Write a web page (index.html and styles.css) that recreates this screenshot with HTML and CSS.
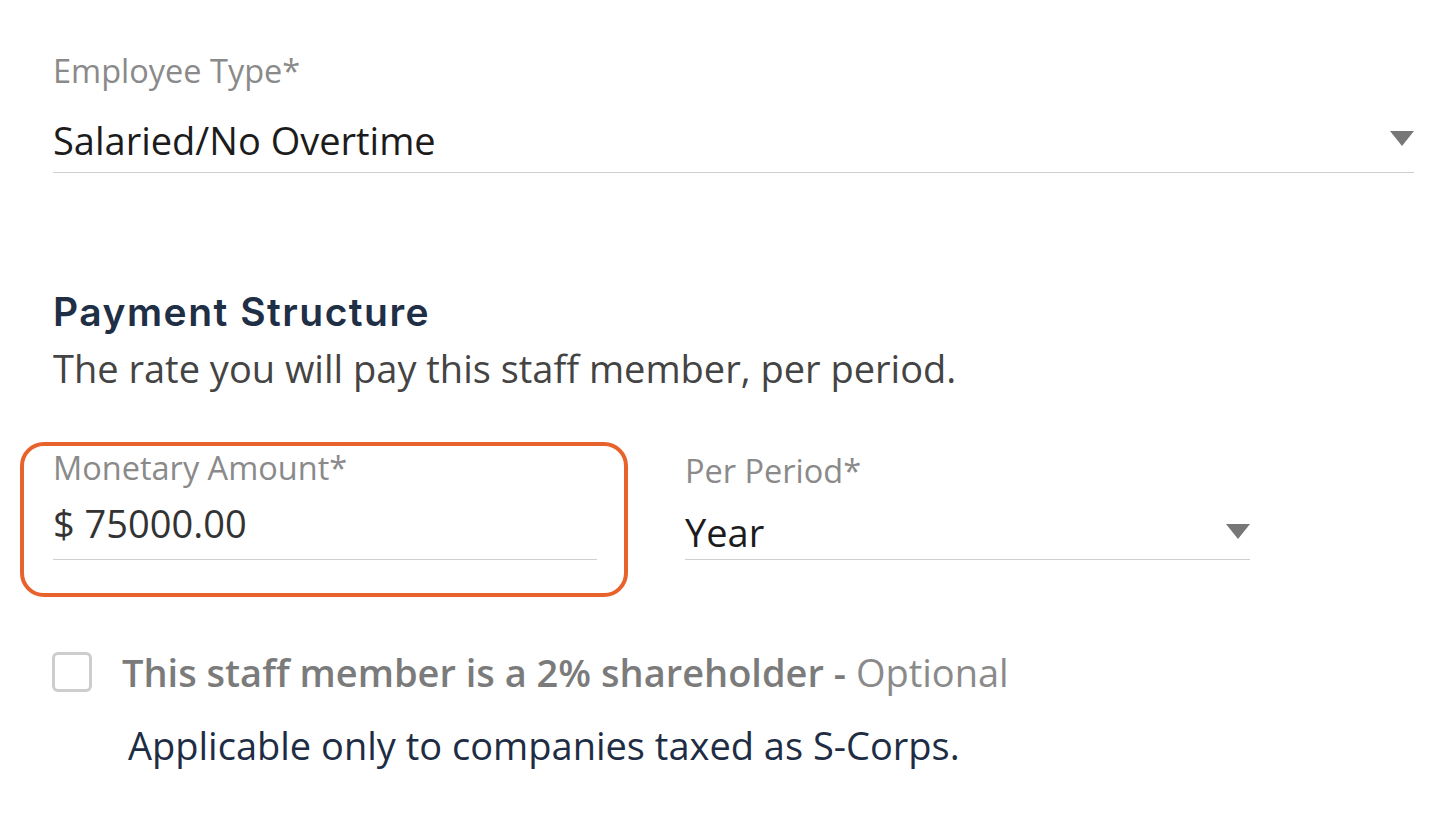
FILE: index.html
```html
<!DOCTYPE html>
<html lang="en">
<head>
<meta charset="utf-8">
<title>Payment Structure</title>
<link rel="stylesheet" href="styles.css">
</head>
<body>
<main class="page">
  <section class="field field-full">
    <div class="label">Employee Type*</div>
    <div class="select-line">
      <div class="value value-dark">Salaried/No Overtime</div>
      <span class="caret caret-top"></span>
    </div>
  </section>

  <h2 class="heading">Payment Structure</h2>
  <p class="subtext">The rate you will pay this staff member, per period.</p>

  <div class="pay-row">
    <section class="field highlight">
      <div class="label">Monetary Amount*</div>
      <div class="input-line">
        <div class="value value-mid">$ 75000.00</div>
      </div>
    </section>
    <section class="field period">
      <div class="label">Per Period*</div>
      <div class="select-line period-line">
        <div class="value value-dark year">Year</div>
        <span class="caret caret-period"></span>
      </div>
    </section>
  </div>

  <label class="check-row">
    <span class="checkbox"></span>
    <span class="check-text"><strong>This staff member is a 2% shareholder - </strong><span class="optional">Optional</span></span>
  </label>
  <p class="note">Applicable only to companies taxed as S-Corps.</p>
</main>
</body>
</html>
```

FILE: styles.css
```css
* { box-sizing: border-box; }

html, body {
  margin: 0;
  padding: 0;
  background: #ffffff;
}

body {
  font-family: "Open Sans", "Noto Sans", sans-serif;
  color: #222;
}

.page {
  width: 1444px;
  padding: 51px 30px 0 53px;
}

.label {
  font-size: 32.5px;
  line-height: 40px;
  color: #8a8a8a;
}

.value {
  font-size: 38px;
  line-height: 50px;
}

.value-dark { color: #1c1c1c; }
.value-mid { color: #333; }

.field-full .label { margin-bottom: 24px; }

.select-line {
  display: flex;
  justify-content: space-between;
  align-items: flex-start;
  padding-bottom: 7px;
  border-bottom: 1px solid #cfcfcf;
}

.caret {
  width: 0;
  height: 0;
  border-left: 12.5px solid transparent;
  border-right: 12.5px solid transparent;
  border-top: 15px solid #777;
}

.caret-top { margin-top: 16px; }

.heading {
  margin: 116px 0 0 0;
  font-family: "Inter", "Open Sans", sans-serif;
  font-weight: 600;
  font-size: 39px;
  line-height: 46px;
  letter-spacing: 1.5px;
  color: #1f2f46;
}

.subtext {
  margin: 8px 0 0 0;
  font-size: 38px;
  line-height: 50px;
  color: #444;
}

.pay-row {
  display: flex;
  align-items: flex-start;
  margin-top: 49px;
  margin-left: -33px;
  gap: 57px;
}

.highlight {
  width: 608px;
  height: 155px;
  border: 4px solid #e8622c;
  border-radius: 24px;
  padding: 2px 27px 0 29px;
}

.highlight .label { margin-bottom: 10px; }

.input-line {
  padding-bottom: 11px;
  border-bottom: 1px solid #cfcfcf;
}

.period {
  width: 565px;
  margin-top: 9px;
}

.period .label { margin-bottom: 16px; }

.period-line { padding-bottom: 2px; }

.caret-period { margin-top: 17px; }

.check-row {
  display: flex;
  align-items: center;
  margin-top: 50px;
  gap: 30px;
}

.checkbox {
  width: 40px;
  height: 40px;
  border: 3px solid #cdcdcd;
  border-radius: 6px;
  flex: none;
  margin-left: -1px;
}

.check-text {
  font-size: 38px;
  line-height: 50px;
  color: #7b7b7b;
}

.check-text strong { font-weight: 600; }

.optional {
  color: #8a8a8a;
  font-weight: 400;
}

.note {
  margin: 23px 0 0 75px;
  font-size: 38px;
  line-height: 50px;
  color: #1e2d44;
}
```
